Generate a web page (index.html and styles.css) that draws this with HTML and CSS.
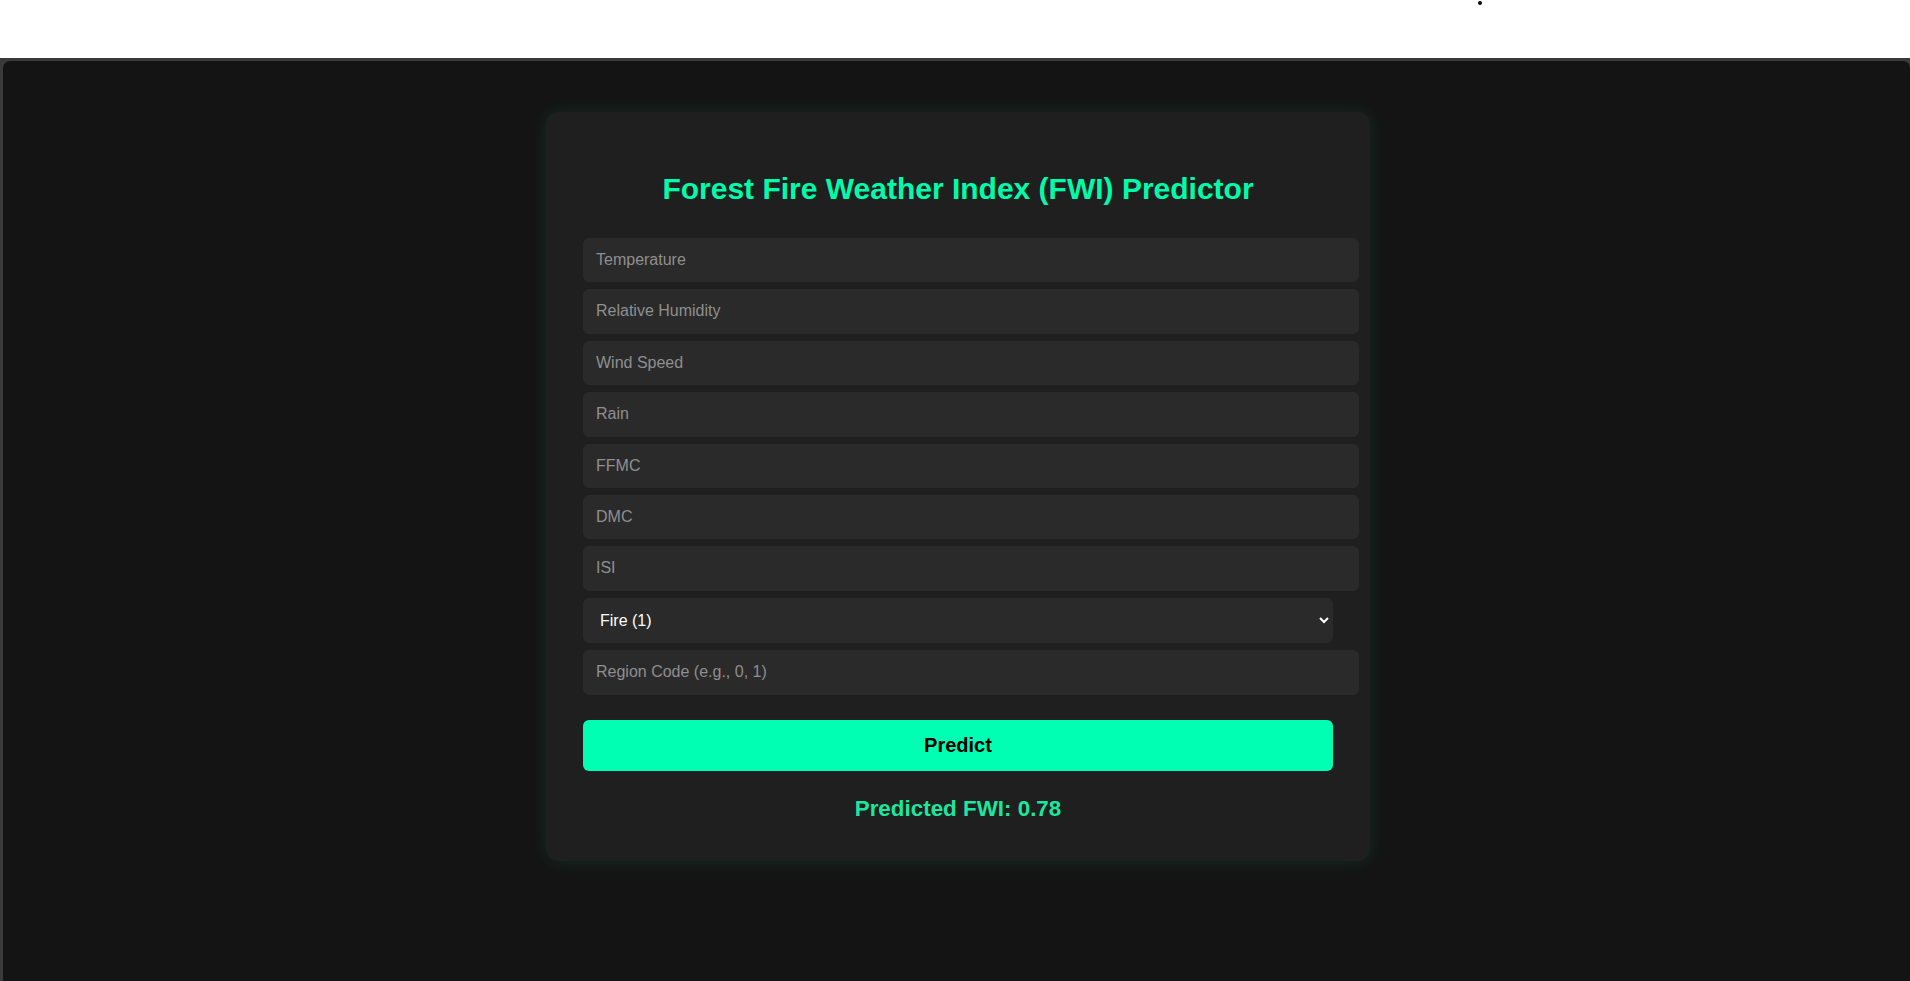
FILE: index.html
```html
<!DOCTYPE html>
<html lang="en">
<head>
<meta charset="utf-8">
<title>FWI Predictor</title>
<link rel="stylesheet" href="styles.css">
</head>
<body>
<div class="topbar"><span class="dot"></span></div>
<div class="frame">
  <div class="panel">
    <div class="card">
      <h2 class="title">Forest Fire Weather Index (FWI) Predictor</h2>
      <form class="form">
        <input class="field" type="text" placeholder="Temperature">
        <input class="field" type="text" placeholder="Relative Humidity">
        <input class="field" type="text" placeholder="Wind Speed">
        <input class="field" type="text" placeholder="Rain">
        <input class="field" type="text" placeholder="FFMC">
        <input class="field" type="text" placeholder="DMC">
        <input class="field" type="text" placeholder="ISI">
        <select class="choice">
          <option>Fire (1)</option>
          <option>Not Fire (0)</option>
        </select>
        <input class="field" type="text" placeholder="Region Code (e.g., 0, 1)">
        <button class="btn" type="button">Predict</button>
      </form>
      <div class="result">Predicted FWI: 0.78</div>
    </div>
  </div>
</div>
</body>
</html>
```
FILE: styles.css
```css
html, body {
  margin: 0;
  padding: 0;
  height: 100%;
}
body {
  background: #ffffff;
  font-family: "Liberation Sans", Arial, sans-serif;
  overflow: hidden;
}
.topbar {
  height: 58px;
  position: relative;
  background: #ffffff;
}
.dot {
  position: absolute;
  left: 1478px;
  top: 1px;
  width: 4px;
  height: 4px;
  border-radius: 50%;
  background: #000;
}
.frame {
  background: #3a3a3a;
  height: calc(100% - 58px);
  box-sizing: border-box;
  padding: 3px 0 0 3px;
}
.panel {
  background: #141414;
  height: 100%;
  border-radius: 7px 7px 0 0;
  display: flex;
  justify-content: center;
  align-items: flex-start;
  padding: 51px 0 0 3px;
  box-sizing: border-box;
}
.card {
  width: 750px;
  padding: 40px 37px 39px;
  background: #1f1f1f;
  border-radius: 12px;
  box-shadow: 0 0 18px rgba(0, 255, 170, 0.10);
}
.title {
  margin: 20px 0 32px;
  font-size: 30px;
  font-weight: bold;
  color: #00fbab;
  text-align: center;
  line-height: normal;
}
.form {
  margin: 0;
}
.field {
  display: block;
  width: 100%;
  box-sizing: content-box;
  padding: 12px;
  margin: 0 0 7px;
  border: 1px solid #2a2a2a;
  border-radius: 6px;
  background: #2a2a2a;
  color: #ffffff;
  font-family: "Liberation Sans", Arial, sans-serif;
  font-size: 16px;
  line-height: 18.4px;
  outline: none;
}
.field::placeholder {
  color: #8f8f8f;
}
.choice {
  display: block;
  width: 100%;
  height: 45.4px;
  padding: 0 12px;
  margin: 0 0 7px;
  border: 1px solid #2a2a2a;
  border-radius: 6px;
  background: #2a2a2a;
  color: #ffffff;
  color-scheme: dark;
  font-family: "Liberation Sans", Arial, sans-serif;
  font-size: 16px;
  outline: none;
}
.btn {
  display: block;
  width: 100%;
  margin: 25px 0 0;
  padding: 14px;
  border: none;
  border-radius: 6px;
  background: #00ffb2;
  color: #000000;
  font-family: "Liberation Sans", Arial, sans-serif;
  font-size: 20px;
  font-weight: bold;
  line-height: 23px;
  cursor: pointer;
}
.result {
  margin-top: 25px;
  text-align: center;
  font-size: 22.4px;
  font-weight: bold;
  color: #1de69e;
}
```
